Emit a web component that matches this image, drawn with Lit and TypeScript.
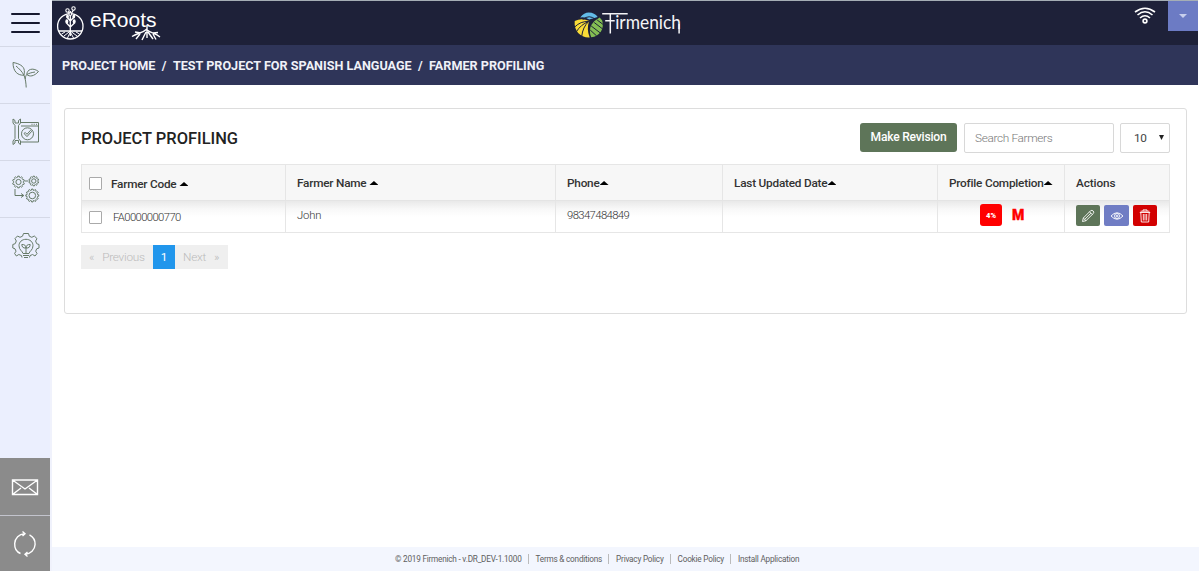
import { LitElement, html, css, svg } from "lit";
import { customElement } from "lit/decorators.js";

const gear = (cx: number, cy: number, outer: number, inner: number, teeth: number) => {
  const pts: string[] = [];
  const step = (Math.PI * 2) / teeth;
  for (let i = 0; i < teeth; i++) {
    const a = i * step - Math.PI / 2;
    for (const [o, r] of [[-0.3, inner], [-0.2, outer], [0.2, outer], [0.3, inner]]) {
      pts.push(`${(cx + Math.cos(a + o * step) * r).toFixed(2)} ${(cy + Math.sin(a + o * step) * r).toFixed(2)}`);
    }
  }
  return `M${pts.join("L")}Z`;
};

const icons = {
  leaf: svg`<path d="M1 1.500C7 2.500 12 5 12.300 9.500C12.500 12 12.300 13 12 14.200C6 14.500 1 11 1 1.500ZM4 5C7 7.500 10 10.500 12 14.200C13.500 18 14 22 14.200 26.500M14.800 13.500C15 8.500 20.500 6 26.500 10.500C22 15.500 17.500 16 14.800 13.500C17.500 12 20 11.500 23 11M14.800 13.500C13.500 15 13.300 16.500 13.300 18"/>`,
  tools: svg`<path d="M9 4.500H26.500V24H9M9 8H26.500M19.500 6.300H20.500M21.700 6.300H22.700M24 6.300H25M1 1V5L3 7.500V20.500L1 23V26.500M8.500 1V5L6.500 7.500V20.500L8.500 23V26.500M1 1L3 2.500V5H6.500V2.500L8.500 1M1 26.500L3 25V22.500H6.500V25L8.500 26.500"/><circle cx="15.500" cy="15.800" r="6"/><path d="M12 15.500L13.300 14.500L15 16.300L18.500 12.300L19.700 13.300L15 18.600Z"/>`,
  flow: svg`<path d="${gear(6.500, 7, 5.900, 4.900, 10)}"/><circle cx="6.500" cy="7" r="2.600"/><path d="${gear(21.800, 6, 4.900, 4, 10)}"/><circle cx="21.800" cy="6" r="2.200"/><path d="${gear(20.300, 20.500, 6.500, 5.400, 12)}"/><circle cx="20.300" cy="20.500" r="3.300"/><path d="M12.500 6H16.500M3 14V20.500H11.500M9 18.500L11.800 20.500L9 22.500"/>`,
  idea: svg`<path d="M10 25.500L9.500 23.600L6.800 22.500L4.400 24L2.600 21.500L4 19.200L3 16.800L.8 16V12.500L3.200 11.700L4.300 9L3 6.600L5.500 4L8 5.300L10.500 4.200L11.500 1.500H16.500L17.300 4.200L19.800 5.300L22.300 4L25 6.600L23.600 9L24.700 11.700L27 12.500V16L24.700 16.800L23.700 19.200L25 21.500L23 24L20.600 22.500L18 23.600L17.500 25.500"/><path d="M11 21.500C10.500 19 7 18 7 13.700C7 10 10 7.300 14 7.300S21 10 21 13.700C21 18 17.500 19 17 21.500ZM11 23.500H17M12 25.500H16M14 21V15.500M14 16C11 16.500 9.800 14.500 9.800 12.500C12.500 12.300 14 13.500 14 16C17 16.500 18.200 14.500 18.200 12.500C15.500 12.300 14 13.500 14 16"/>`,
  mail: svg`<path d="M1.500 7H26.500V21.500H1.500ZM1.500 7L14 16L26.500 7M1.500 21.500L10 15M26.500 21.500L18 15"/>`,
  sync: svg`<path d="M9.500 23.500C5.500 22 3.500 18 3.700 13.500C4 8 8 4 13.500 3.700M11.500 1.500L14 3.700L11.500 6M18.500 4.800C22.500 7 24.300 10.500 24.100 14.500C23.800 20 19.500 23.800 14.300 24.300M16.500 22L14 24.300L16.500 26.500"/>`,
};

@customElement("nav-rail")
class NavRail extends LitElement {
  static styles = css`
    :host { display: flex; flex-direction: column; width: 50px; flex: none; height: 571px; background: #ebeffe; border-right: 2px solid #f0f2fc; box-sizing: content-box; }
    .cell { height: 56px; border-bottom: 1px solid #d5d9e7; display: flex; align-items: center; justify-content: center; }
    .burger { height: 46px; flex-direction: column; gap: 6.500px; }
    .bar { width: 29px; height: 2.500px; border-radius: 1px; background: #17192f; }
    svg { width: 28px; height: 28px; fill: none; stroke: #667a68; stroke-width: 1; margin-left: 1px; }
    .spacer { flex: 1; }
    .last { border-bottom: 0; }
    .dark { background: #8b8b8b; border-color: #c3c4cd; }
    .dark svg { stroke: #fff; stroke-width: 1.400; margin: 1px 0 0; }
    .end { height: 55px; border-bottom: 0; }
    .first-dark { height: 57px; box-sizing: content-box; }
  `;
  render() {
    const icon = (g: unknown) => html`<svg viewBox="0 0 28 28">${g}</svg>`;
    return html`
      <div class="cell burger"><div class="bar"></div><div class="bar"></div><div class="bar"></div></div>
      <div class="cell">${icon(icons.leaf)}</div>
      <div class="cell">${icon(icons.tools)}</div>
      <div class="cell">${icon(icons.flow)}</div>
      <div class="cell last">${icon(icons.idea)}</div>
      <div class="spacer"></div>
      <div class="cell dark first-dark">${icon(icons.mail)}</div>
      <div class="cell dark end">${icon(icons.sync)}</div>`;
  }
}

@customElement("top-bar")
class TopBar extends LitElement {
  static styles = css`
    :host { display: grid; grid-template-columns: 1fr 120px 1fr; height: 44px; background: #1e2139; border-top: 1px solid #a5aeb5; }
    svg { display: block; }
    .logo { margin-left: 4px; }
    .right { display: flex; justify-content: flex-end; align-items: flex-start; }
    .wifi { margin: 6px 12px 0 0; }
    .user { width: 30px; height: 30px; background: #6c7bc4; display: flex; align-items: center; justify-content: center; }
  `;
  render() {
    return html`
      <svg class="logo" width="112" height="44" viewBox="0 0 112 44" fill="none" stroke="#fff">
        <circle cx="14.300" cy="25.300" r="12.700" stroke-width="1.300"/>
        <path d="M2.500 30H26M14.300 35V10M14.300 26L10.500 22M14.300 26L18.500 22M14.300 20L11 16M14.300 20L18 16M14.300 14L12 10M14.300 14L17.500 9" stroke-width="1.300"/>
        <path d="M14.300 30L8 35M14.300 30L21 35M14.300 31L11.500 37M14.300 31L17.500 37M9 31L5.500 33M20 31L23.500 33" stroke-width="1"/>
        <g stroke-width="1.100" fill="#1e2139"><circle cx="11.500" cy="9.500" r="1.700"/><circle cx="17.500" cy="7.500" r="1.700"/><circle cx="14.300" cy="13" r="1.400"/></g>
        <g fill="#fff" stroke="none"><ellipse cx="10.800" cy="20.500" rx="1.500" ry="2.200"/><ellipse cx="18.200" cy="20.500" rx="1.500" ry="2.200"/><ellipse cx="11.500" cy="15.500" rx="1.400" ry="2"/><ellipse cx="17.800" cy="15.500" rx="1.400" ry="2"/></g>
        <text x="34" y="25.700" fill="#fff" stroke="none" font-family="Liberation Sans, Arial, sans-serif" font-size="20" textLength="66.500" lengthAdjust="spacingAndGlyphs">eRoots</text>
        <path d="M91 24V31M91 28C87 32 81 32 76 35.500M91 29C96 32.500 99 32 104 36M90 31L86 39M92 31L97 38M85 32L79 31M84 33L80 38M97 32L102 31.500M97 33L100 38.500M91 31V37" stroke-width="1.400"/>
      </svg>
      <svg width="120" height="44" viewBox="0 0 120 44" fill="none">
        <g transform="translate(.7 0)">
        <path d="M14.500 16.500C17 13 20 11.500 23 11.500C27 11.500 30 13 32 16L23.500 18.500Q19 15.500 14.500 16.500Z" fill="#62bce8"/>
        <path d="M9 20Q16 16.500 23.500 20Q20.500 28 24 36.500C15 37 8 30 9 20Z" fill="#fadc37"/>
        <path d="M36.500 19.500C39 28 34 35.500 25.500 36.300Q22.500 28.500 26 23.500Q29 19 34 16.500Z" fill="#83bd53"/>
        <path d="M17 18.500Q23.500 13 30 18.500M9 26Q15 20 23 20.500M10.500 31Q15 23.500 23 20.500M16 35.500Q17 26 23 20.500M25.500 25L36 33M24.500 29L31 35M28.500 21.500L37 28M31.500 19L37.500 23.500" stroke="#1e2139" stroke-width="1"/>
        <path d="M36.500 12.700H62M39.500 19.700H49M44.600 13V32.500M113.400 23V32.500" stroke="#f4f4f7" stroke-width="1.500"/>
        <text x="49.500" y="27.700" fill="#f4f4f7" font-family="Lato, sans-serif" font-size="18.500" textLength="65.800" lengthAdjust="spacingAndGlyphs">irmenich</text>
        </g>
      </svg>
      <div class="right">
        <svg class="wifi" width="22" height="18" viewBox="0 0 22 18" fill="none" stroke="#fff" stroke-width="1.600">
          <circle cx="11" cy="14" r="1.900"/><path d="M6 11Q11 6.500 16 11M3.500 8Q11 1.500 18.500 8M1 5Q11-2.500 21 5"/>
        </svg>
        <div class="user"><svg width="8" height="4" viewBox="0 0 8 4"><path d="M0 0H8L4 4Z" fill="#c8cfed"/></svg></div>
      </div>`;
  }
}

@customElement("farmer-table")
class FarmerTable extends LitElement {
  static styles = css`
    :host { display: block; }
    .row { display: grid; grid-template-columns: 203px 270px 167px 215px 127px 105px; border: 1px solid #e6e6e6; border-top: 0; height: 31px; background: linear-gradient(#e9e9e9, #f8f8f8 8px, #fff 16px); font-size: 11.300px; font-weight: 300; color: #333; letter-spacing: -.2px; }
    .row.head { height: 35px; border: 1px solid #e6e6e6; border-bottom-color: #e4e4e4; background: #f7f7f7; font-size: 11.800px; font-weight: 500; color: #333; letter-spacing: -.22px; }
    .row .num { letter-spacing: -.62px; }
    .c { display: flex; align-items: center; padding-left: 11px; border-left: 1px solid #e6e6e6; box-sizing: border-box; white-space: nowrap; padding-bottom: 2px; }
    .head .c { padding-bottom: 0; }
    .c.first, .head .c.first { border-left: 0; padding-left: 7px; padding-bottom: 0; padding-top: 1px; }
    .head .c.first { padding-top: 2px; }
    .box { width: 11px; height: 11px; border: 1px solid #aaa; border-radius: 1px; background: #fff; margin-right: 9px; }
    .row:not(.head) .box { margin-right: 11px; }
    .up { width: 9px; height: 4px; background: #000; clip-path: polygon(50% 0, 100% 100%, 0 100%); margin-top: 1px; }
    .gap { margin-left: 3px; }
    .c.done { padding-left: 42px; gap: 10px; padding-bottom: 3px; }
    .head .c.done { padding-left: 11px; gap: 0; padding-bottom: 0; }
    .pct { width: 22px; height: 22px; border-radius: 3px; background: #f00; color: #fff; font-size: 7.500px; font-weight: 900; letter-spacing: 0; display: grid; place-items: center; }
    .m { color: #f00; font-size: 14px; font-weight: 900; letter-spacing: 0; -webkit-text-stroke: .4px #f00; }
    .acts { gap: 4px; padding-left: 11px; padding-bottom: 2px; }
    .head .acts { padding-bottom: 0; letter-spacing: -.1px; }
    .b { width: 24.400px; height: 21px; border-radius: 2px; background: #5e7559; display: grid; place-items: center; }
    .b.v { background: #707dc4; }
    .b.d { background: #d20000; }
    svg { width: 14px; height: 14px; fill: none; stroke: #fff; stroke-width: .9; }
  `;
  render() {
    return html`
      <div class="row head">
        <div class="c first"><span class="box"></span><span>Farmer Code</span><i class="up gap"></i></div>
        <div class="c"><span>Farmer Name</span><i class="up gap"></i></div>
        <div class="c"><span>Phone</span><i class="up"></i></div>
        <div class="c"><span>Last Updated Date</span><i class="up"></i></div>
        <div class="c done"><span>Profile Completion</span><i class="up"></i></div>
        <div class="c acts">Actions</div>
      </div>
      <div class="row">
        <div class="c first"><span class="box"></span><span class="num">FA0000000770</span></div>
        <div class="c">John</div>
        <div class="c num">98347484849</div>
        <div class="c"></div>
        <div class="c done"><span class="pct">4%</span><span class="m">M</span></div>
        <div class="c acts">
          <span class="b"><svg viewBox="0 0 14 14"><path d="M1.500 12.500L2.300 9L9.500 1.800Q11 .8 12.200 2Q13.300 3.200 12.300 4.500L5 11.700ZM2.300 9L5 11.700M8.500 2.800L11.200 5.500M3.800 10.300L10 4.100"/></svg></span>
          <span class="b v"><svg viewBox="0 0 14 14"><path d="M1 7Q7 .5 13 7Q7 13.500 1 7Z"/><circle cx="7" cy="7" r="2.500"/><circle cx="7" cy="7" r=".8"/></svg></span>
          <span class="b d"><svg viewBox="0 0 14 14"><path d="M2.800 3.800L3.300 13H10.700L11.200 3.800M1.800 3.500H12.200M2.500 2.200H11.500M5 2V.9H9V2M5.300 5V11.500M7 5V11.500M8.700 5V11.500"/></svg></span>
        </div>
      </div>`;
  }
}

@customElement("app-root")
class AppRoot extends LitElement {
  static styles = css`
    :host { display: flex; width: 1200px; height: 571px; overflow: hidden; background: #fff; font-family: Roboto, sans-serif; }
    .main { width: 1147px; display: flex; flex-direction: column; }
    top-bar, .crumbs { margin-right: 1px; }
    .crumbs { height: 40px; flex: none; background: #2f3559; color: #f0f1f8; font-size: 12.620px; font-weight: 700; display: flex; align-items: center; padding-left: 10px; gap: 6.400px; white-space: nowrap; }
    .area { flex: 1; padding: 23px 12px 0; }
    .card { height: 204px; border: 1px solid #ddd; border-radius: 3px; padding: 0 16px; }
    .top { height: 55px; display: flex; align-items: center; }
    h1 { flex: 1; margin: 4px 0 0; font-size: 16.450px; font-weight: 500; color: #222; }
    .btn { width: 97px; height: 28px; padding-bottom: 1px; margin-top: 2px; border-radius: 3px; background: #5e7559; color: #fff; font-size: 12.100px; font-weight: 500; letter-spacing: -.22px; display: grid; place-items: center; }
    .field { height: 27px; padding-bottom: 1px; margin-top: 3px; border: 1px solid #d8d8d8; border-radius: 2px; font-size: 11.800px; font-weight: 300; color: #777; letter-spacing: -.33px; display: flex; align-items: center; }
    .search { width: 138px; padding-left: 10px; margin-left: 7px; }
    .size { width: 48px; margin-left: 6px; color: #444; letter-spacing: -.3px; }
    .size span { margin-left: 13px; flex: 1; font-weight: 400; }
    .caret { width: 5px; height: 5px; background: #222; clip-path: polygon(0 0, 100% 0, 50% 100%); margin-right: 5px; }
    .pages { display: flex; margin-top: 12px; height: 24px; width: 147px; background: #efefef; font-size: 11.800px; font-weight: 300; letter-spacing: -.24px; color: #bbb; align-items: center; }
    .prev, .next { display: flex; gap: 8px; box-sizing: border-box; }
    .prev { width: 72px; padding-left: 8px; }
    .next { width: 53px; padding-left: 8px; }
    .on { width: 22px; height: 24px; display: grid; place-items: center; background: #2196ec; color: #fff; font-weight: 400; }
    footer { height: 24px; background: #f3f6fe; display: flex; align-items: center; padding-left: 343px; font-size: 8.200px; letter-spacing: -.21px; color: #606060; white-space: nowrap; }
    footer span + span { border-left: 1px solid #bbb; margin-left: 6px; padding-left: 7px; }
  `;
  render() {
    return html`
      <nav-rail></nav-rail>
      <div class="main">
        <top-bar></top-bar>
        <div class="crumbs"><span>PROJECT HOME</span><span>/</span><span>TEST PROJECT FOR SPANISH LANGUAGE</span><span>/</span><span>FARMER PROFILING</span></div>
        <div class="area">
          <div class="card">
            <div class="top">
              <h1>PROJECT PROFILING</h1>
              <div class="btn">Make Revision</div>
              <div class="field search">Search Farmers</div>
              <div class="field size"><span>10</span><i class="caret"></i></div>
            </div>
            <farmer-table></farmer-table>
            <div class="pages">
              <div class="prev"><span>«</span><span>Previous</span></div>
              <div class="on">1</div>
              <div class="next"><span>Next</span><span>»</span></div>
            </div>
          </div>
        </div>
        <footer><span>© 2019 Firmenich - v.DR_DEV-1.1000</span><span>Terms &amp; conditions</span><span>Privacy Policy</span><span>Cookie Policy</span><span>Install Application</span></footer>
      </div>`;
  }
}
